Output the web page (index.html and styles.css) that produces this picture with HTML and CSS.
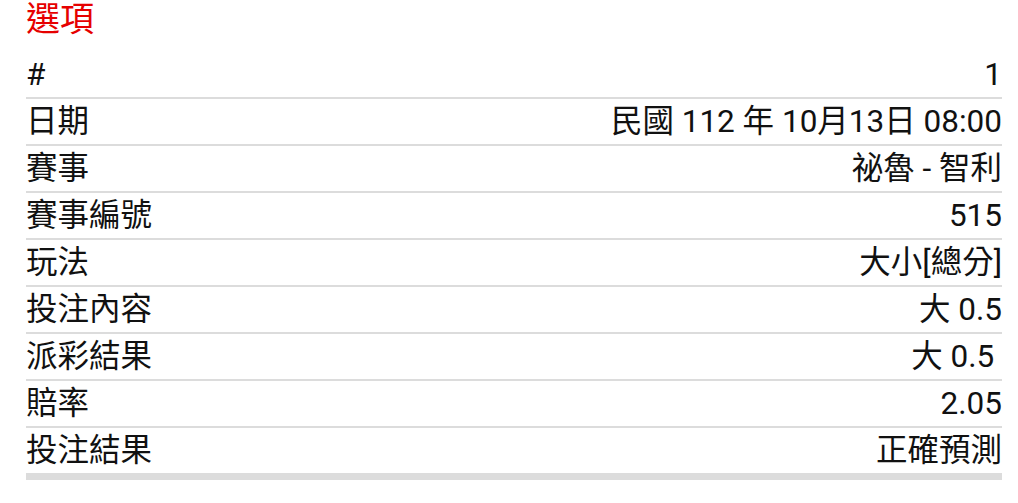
FILE: index.html
```html
<!DOCTYPE html>
<html lang="zh-Hant">
<head>
<meta charset="utf-8">
<link rel="stylesheet" href="styles.css">
</head>
<body>
<div class="page">
  <h1 class="title">選項</h1>
  <div class="table">
    <div class="row"><span class="label">#</span><span class="value">1</span></div>
    <div class="row"><span class="label">日期</span><span class="value">民國 112 年 10月13日 08:00</span></div>
    <div class="row"><span class="label">賽事</span><span class="value">祕魯 - 智利</span></div>
    <div class="row"><span class="label">賽事編號</span><span class="value">515</span></div>
    <div class="row"><span class="label">玩法</span><span class="value">大小[總分]</span></div>
    <div class="row"><span class="label">投注內容</span><span class="value">大 0.5</span></div>
    <div class="row"><span class="label">派彩結果</span><span class="value pre">大 0.5 </span></div>
    <div class="row"><span class="label">賠率</span><span class="value">2.05</span></div>
    <div class="row last"><span class="label">投注結果</span><span class="value">正確預測</span></div>
  </div>
</div>
</body>
</html>
```
FILE: styles.css
```css
html, body {
  margin: 0;
  padding: 0;
  background: #ffffff;
}
body {
  font-family: Roboto, "Noto Sans CJK TC", sans-serif;
  color: #111111;
}
.page {
  padding: 0 16px 0 26px;
}
.title {
  margin: 0;
  height: 52px;
  font-size: 34px;
  line-height: 38px;
  font-weight: normal;
  color: #e60000;
}
.table {
  display: flex;
  flex-direction: column;
}
.row {
  display: flex;
  justify-content: space-between;
  align-items: center;
  height: 45px;
  font-size: 31.5px;
  line-height: 43px;
  border-bottom: 2px solid #dcdcdc;
}
.row.last {
  height: 45px;
  border-bottom: 7px solid #dcdcdc;
}
.value {
  text-align: right;
}
.pre {
  white-space: pre;
}
```
